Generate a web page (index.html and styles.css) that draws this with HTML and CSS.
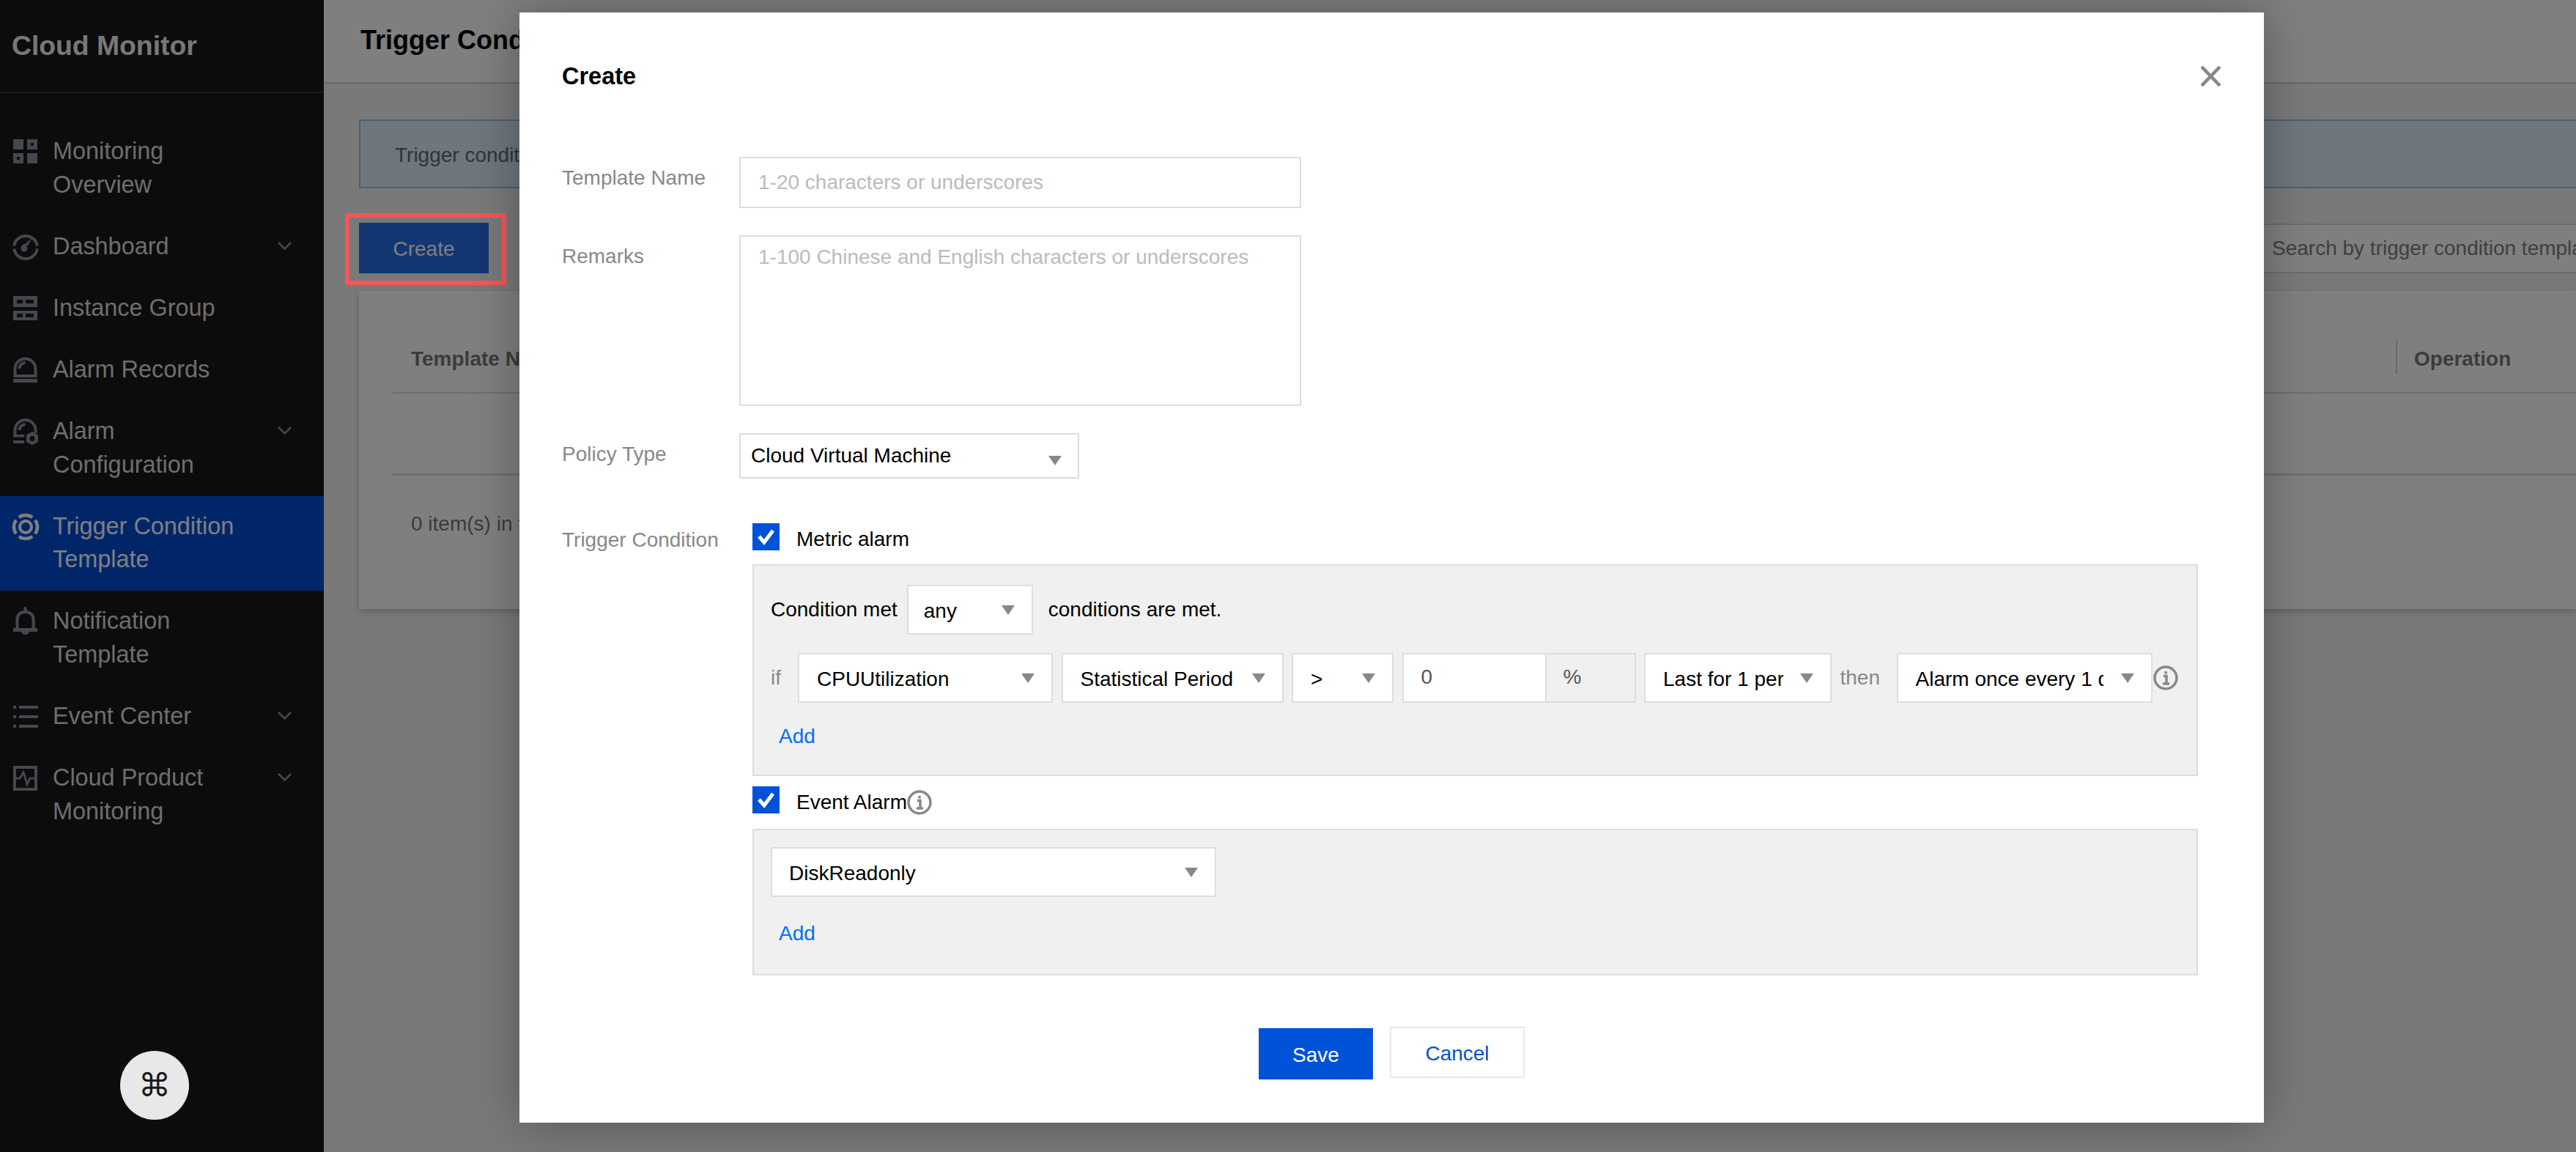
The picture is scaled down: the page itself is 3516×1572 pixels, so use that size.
FILE: index.html
```html
<!DOCTYPE html>
<html lang="en">
<head>
  <meta charset="UTF-8" />
  <title>Cloud Monitor - Trigger Condition Template</title>
  <link rel="stylesheet" href="styles.css">
</head>
<body>

  <!-- === Sidebar === -->
  <aside class="sidebar">
    <div class="brand">Cloud Monitor</div>
    <nav class="nav">
      <a class="nav-item">
        <svg class="nav-icon" viewBox="0 0 36 36"><path fill-rule="evenodd" d="M1 1h14v14H1zM20 1h14v14H20zM25 6v4h4V6zM1 20h14v14H1zM6 25v4h4v-4zM20 20h14v14H20z"/></svg>
        <span class="nav-label">Monitoring<br>Overview</span>
      </a>
      <a class="nav-item">
        <svg class="nav-icon" viewBox="0 0 36 36"><path class="line" d="M2.200 16.500A16 16 0 0 1 33.800 16.500M2.200 20.500A16 16 0 0 0 33.800 20.500"/><circle cx="16" cy="20" r="4.500"/><path d="M12.500 18l9-2.500 4-7.500-1-.5-6.500 6-4.500 1.500z"/></svg>
        <span class="nav-label">Dashboard</span>
        <svg class="chevron" viewBox="0 0 19 11"><path d="M1 1l8.500 8.500L18 1"/></svg>
      </a>
      <a class="nav-item">
        <svg class="nav-icon" viewBox="0 0 36 36"><path fill-rule="evenodd" d="M1 1h33v15H1zM6 6v5h8V6zM18 6v5h11V6zM1 21h33v13H1zM6 25v5h8v-5zM18 25v5h11v-5z"/></svg>
        <span class="nav-label">Instance Group</span>
      </a>
      <a class="nav-item">
        <svg class="nav-icon" viewBox="0 0 36 36"><path class="line" d="M3.500 26V16.500a14 14 0 0 1 28 0V26z"/><path class="line" d="M9.500 16c0-4.500 3.500-8 8-8"/><path d="M1 30h33v5H1z"/></svg>
        <span class="nav-label">Alarm Records</span>
      </a>
      <a class="nav-item">
        <svg class="nav-icon" viewBox="0 0 36 36"><path class="line" d="M3.500 23V16a14 14 0 0 1 28 0v4"/><path class="line" d="M9.500 16c0-4.500 3.500-8 8-8"/><path d="M1 22h15v3.500H1zM1 30h15v4H1z"/><path fill-rule="evenodd" d="M27 18l8 4.500v9.500l-8 4.500-8-4.500v-9.500zM27 24a3.500 3.500 0 1 0 0 7 3.500 3.500 0 0 0 0-7z"/></svg>
        <span class="nav-label">Alarm<br>Configuration</span>
        <svg class="chevron" viewBox="0 0 19 11"><path d="M1 1l8.500 8.500L18 1"/></svg>
      </a>
      <a class="nav-item active">
        <svg class="nav-icon" viewBox="0 0 36 36"><circle class="line" cx="18" cy="18" r="8"/><path class="line wide" d="M8.800 4.900A16 16 0 0 1 27.200 4.900M31.100 8.800A16 16 0 0 1 31.100 27.200M27.200 31.100A16 16 0 0 1 8.800 31.100M4.900 27.200A16 16 0 0 1 4.900 8.800"/></svg>
        <span class="nav-label">Trigger Condition<br>Template</span>
      </a>
      <a class="nav-item">
        <svg class="nav-icon" viewBox="0 0 36 36"><path class="line" d="M6.500 28V15C6.500 9 11 5 17.500 5S28.500 9 28.500 15V28"/><path d="M15.500 0a2 2 0 0 1 4 0v5h-4zM1 27h33v5H1zM12 32h11a5.500 4 0 0 1-11 0z"/></svg>
        <span class="nav-label">Notification<br>Template</span>
      </a>
      <a class="nav-item">
        <svg class="nav-icon" viewBox="0 0 36 36"><path d="M1 3h4v4H1zM9 3h26v4H9zM1 16h4v4H1zM9 16h26v4H9zM1 29h4v4H1zM9 29h26v4H9z"/></svg>
        <span class="nav-label">Event Center</span>
        <svg class="chevron" viewBox="0 0 19 11"><path d="M1 1l8.500 8.500L18 1"/></svg>
      </a>
      <a class="nav-item">
        <svg class="nav-icon" viewBox="0 0 36 36"><path class="line" d="M3 3h29v30H3z"/><path class="line thin" d="M4 18h6l5-8 5 16 4-8h9"/></svg>
        <span class="nav-label">Cloud Product<br>Monitoring</span>
        <svg class="chevron" viewBox="0 0 19 11"><path d="M1 1l8.500 8.500L18 1"/></svg>
      </a>
    </nav>
  </aside>

  <!-- === Page behind the dialog === -->
  <main class="main">
    <header class="page-head"><h1>Trigger Condition Template</h1></header>
    <div class="content">
      <div class="alert">Trigger condition templates</div>
      <div class="toolbar">
        <button class="btn-create">Create</button>
        <div class="search">Search by trigger condition template name</div>
      </div>
      <section class="table-card">
        <div class="table-head">
          <span>Template Name</span>
          <span class="col-op">Operation</span>
        </div>
        <div class="table-empty"></div>
        <div class="table-foot">0 item(s) in total</div>
      </section>
    </div>
  </main>

  <div class="mask"></div>
  <div class="highlight"></div>
  <button class="cmd-btn">⌘</button>

  <!-- === Create dialog === -->
  <div class="modal">
    <div class="modal-head">
      <h2>Create</h2>
      <svg class="close" viewBox="0 0 27 28"><path d="M1 1l25 26M26 1L1 27"/></svg>
    </div>

    <div class="form-row row-name">
      <label>Template Name</label>
      <div class="text-input placeholder">1-20 characters or underscores</div>
    </div>
    <div class="form-row row-remarks">
      <label>Remarks</label>
      <div class="text-area placeholder">1-100 Chinese and English characters or underscores</div>
    </div>
    <div class="form-row row-policy">
      <label>Policy Type</label>
      <div class="select sel-policy"><span>Cloud Virtual Machine</span><i></i></div>
    </div>

    <div class="form-row row-trigger">
      <label>Trigger Condition</label>
      <div class="trigger-body">
        <div class="check-line">
          <svg class="checkbox" viewBox="0 0 37 37"><path d="M9 18l7 8 12-16"/></svg>
          <span>Metric alarm</span>
        </div>
        <div class="panel panel-metric">
          <div class="cond-line">
            <span class="cond-met">Condition met</span>
            <div class="select sel-any"><span>any</span><i></i></div>
            <span class="cond-tail">conditions are met.</span>
          </div>
          <div class="cond-line rule-line">
            <span class="word word-if">if</span>
            <div class="select sel-metric"><span>CPUUtilization</span><i></i></div>
            <div class="select sel-period"><span>Statistical Period</span><i></i></div>
            <div class="select sel-op"><span>&gt;</span><i></i></div>
            <div class="input-group">
              <span class="ig-value">0</span>
              <span class="ig-unit">%</span>
            </div>
            <div class="select sel-last"><span>Last for 1 period</span><i></i></div>
            <span class="word word-then">then</span>
            <div class="select sel-action"><span>Alarm once every 1 day</span><i></i></div>
            <svg class="info" viewBox="0 0 34 34"><circle cx="17" cy="17" r="15"/><path d="M14 14.500h4V25M13 25h9M17 8v3.500"/></svg>
          </div>
          <a class="add-link">Add</a>
        </div>

        <div class="check-line check-event">
          <svg class="checkbox" viewBox="0 0 37 37"><path d="M9 18l7 8 12-16"/></svg>
          <span>Event Alarm</span>
          <svg class="info" viewBox="0 0 34 34"><circle cx="17" cy="17" r="15"/><path d="M14 14.500h4V25M13 25h9M17 8v3.500"/></svg>
        </div>
        <div class="panel panel-event">
          <div class="select sel-event"><span>DiskReadonly</span><i></i></div>
          <a class="add-link">Add</a>
        </div>
      </div>
    </div>

    <div class="modal-foot">
      <button class="btn-save">Save</button>
      <button class="btn-cancel">Cancel</button>
    </div>
  </div>

</body>
</html>
```

FILE: styles.css
```css
/* Basic Resets */
* { margin: 0; padding: 0; box-sizing: border-box; font-family: "Liberation Sans", Arial, sans-serif; }
html, body { width: 3516px; height: 1572px; overflow: hidden; }
body { display: flex; position: relative; background: #f3f3f3; color: #000; font-size: 28px; }
button { border: none; font-size: 28px; }

/* === Sidebar === */
.sidebar { width: 442px; flex: none; background: #181818; color: #dcdcdc; }
.brand {
  height: 127px;
  padding: 38px 0 0 16px;
  border-bottom: 2px solid #333;
  font-size: 37.300px;
  line-height: 48px;
  font-weight: bold;
  color: #f0f0f0;
}
.nav { padding-top: 38px; }
.nav-item {
  display: flex;
  align-items: flex-start;
  padding: 19.100px 0;
  font-size: 32.400px;
  line-height: 45.800px;
}
.nav-item.active { background: #004cd4; color: #fff; }
.nav-item.active .nav-icon { fill: #fff; stroke: #fff; }
.nav-icon {
  width: 36px;
  height: 36px;
  flex: none;
  margin: 5px 19px 0 17px;
  fill: #88919c;
  stroke: #88919c;
  stroke-width: 0;
  overflow: visible;
}
.nav-icon .line { fill: none; stroke-width: 4; }
.nav-icon .wide { stroke-width: 4.500; }
.nav-icon .thin { stroke-width: 3; }
.chevron {
  width: 19px;
  height: 11px;
  flex: none;
  margin: 16px 44px 0 auto;
  fill: none;
  stroke: #88919c;
  stroke-width: 2.500;
}

/* === Page behind the dialog === */
.main { flex: 1; min-width: 0; overflow: hidden; }
.page-head { height: 115px; padding: 33px 0 0 50px; background: #fff; border-bottom: 3px solid #ddd; }
.page-head h1 { font-size: 36px; line-height: 44px; white-space: nowrap; }
.content { padding: 48px 0 0 48px; }
.alert {
  height: 94px;
  padding-left: 47px;
  line-height: 94px;
  background: #dcecfd;
  border: 2px solid #94c0f0;
  border-right: none;
  color: #5e6a75;
}
.toolbar { display: flex; justify-content: space-between; margin-top: 47px; height: 69px; }
.btn-create { width: 177px; padding-top: 3px; background: #266ce8; color: #fff; }
.search {
  width: 426px;
  height: 68px;
  margin-top: 1px;
  padding-left: 11px;
  line-height: 64px;
  background: #fff;
  border-top: 2px solid #d8d8d8;
  border-bottom: 2px solid #d8d8d8;
  color: #7f7f7f;
  white-space: nowrap;
  overflow: hidden;
}
.table-card { height: 434px; margin-top: 24px; padding-left: 46px; background: #fff; box-shadow: 0 4px 10px rgba(0,0,0,.2); color: #777; }
.table-head {
  display: flex;
  justify-content: space-between;
  height: 140px;
  padding: 71px 0 0 25px;
  font-weight: bold;
  line-height: 44px;
  border-bottom: 2px solid #ddd;
}
.col-op { position: relative; width: 221px; }
.col-op::before { content: ""; position: absolute; left: -25px; top: -4px; width: 2px; height: 46px; background: #d0d0d8; }
.table-empty { height: 112px; border-bottom: 3px solid #ddd; }
.table-foot { padding: 44px 0 0 25px; line-height: 44px; white-space: nowrap; }

.mask { position: absolute; inset: 0; background: rgba(0,0,0,.5); }
.highlight { position: absolute; left: 471px; top: 291px; width: 220px; height: 98px; border: 6px solid #f55656; border-radius: 2px; }
.cmd-btn {
  position: absolute;
  left: 164px;
  top: 1434px;
  width: 94px;
  height: 94px;
  border-radius: 50%;
  background: #e8e8e8;
  color: #1a1a1a;
  font-family: "DejaVu Sans", sans-serif;
  font-size: 44px;
  line-height: 94px;
}

/* === Create dialog === */
.modal {
  position: absolute;
  left: 709px;
  top: 17px;
  width: 2381px;
  height: 1515px;
  padding: 0 90px 0 58px;
  background: #fff;
  box-shadow: 0 0 60px rgba(0,0,0,.3);
}
.modal-head { display: flex; justify-content: space-between; align-items: center; height: 197px; padding: 64px 0 87px; margin-right: -31px; }
.modal-head h2 { font-size: 32.500px; line-height: 46px; }
.close { width: 27px; height: 28px; fill: none; stroke: #888; stroke-width: 4.500; }

.form-row { display: flex; }
.form-row label { width: 242px; flex: none; padding-top: 6px; line-height: 46px; color: #888; }
.row-remarks { margin-top: 37px; }
.row-policy { margin-top: 37px; }
.row-trigger { margin-top: 61px; }
.row-trigger label { padding-top: 0; }
.placeholder { color: #bbb; }
.text-input, .text-area { width: 767px; padding-left: 24px; border: 2px solid #ddd; }
.text-input { height: 70px; line-height: 66px; }
.text-area { height: 233px; padding-top: 6px; line-height: 44px; }

.select {
  position: relative;
  display: flex;
  align-items: center;
  height: 68px;
  padding-left: 24px;
  background: #fff;
  border: 2px solid #ddd;
  flex: none;
  white-space: nowrap;
}
.select span { display: block; overflow: hidden; line-height: 44px; padding-top: 3px; }
.select i {
  position: absolute;
  right: 23px;
  top: 50%;
  margin-top: -6px;
  border-top: 13px solid #888;
  border-left: 9px solid transparent;
  border-right: 9px solid transparent;
}
.sel-policy { width: 464px; height: 62px; padding-left: 14px; }
.sel-policy span { padding-top: 0; }
.sel-policy i { right: 22px; margin-top: 0; }
.sel-any { width: 172px; padding-left: 21px; }
.sel-metric { width: 348px; }
.sel-period { width: 303px; }
.sel-op { width: 139px; }
.sel-last { width: 256px; }
.sel-last span { width: 164px; }
.sel-action { width: 349px; }
.sel-action span { width: 256px; }
.sel-event { width: 608px; padding-left: 23px; }

.trigger-body { width: 1973px; margin-left: 18px; }
.check-line { display: flex; align-items: center; height: 37px; }
.check-line span { padding-top: 6px; }
.checkbox { width: 37px; height: 37px; flex: none; margin-right: 23px; background: #0052d9; fill: none; stroke: #fff; stroke-width: 5; }
.check-event { margin-top: 14px; }
.check-event .info { margin-top: 6px; }
.panel { background: #f0f0f0; border: 2px solid #ddd; }
.panel-metric { margin-top: 19px; padding: 26px 0 30px 23px; }
.panel-event { margin-top: 21px; padding: 23px 0 33px 23px; }
.cond-line { display: flex; align-items: center; }
.cond-met { margin-right: 13px; }
.cond-tail { margin-left: 21px; }
.rule-line { margin-top: 25px; gap: 11.500px; }
.word { color: #888; }
.word-if { width: 25.500px; }
.word-then { width: 65.500px; }
.input-group { display: flex; width: 319px; height: 68px; flex: none; border: 2px solid #ddd; line-height: 62px; color: #555; }
.ig-value { width: 195px; padding-left: 24px; background: #fff; border-right: 2px solid #ddd; }
.ig-unit { padding-left: 23px; }
.info { width: 34px; height: 34px; flex: none; fill: none; stroke: #888; stroke-width: 3.500; }
.rule-line .info { margin-left: -10px; }
.add-link { display: block; width: max-content; margin: 22px 0 0 11px; padding-top: 2px; line-height: 44px; color: #006eff; }
.panel-event .add-link { margin-top: 26px; }

.modal-foot { display: flex; justify-content: center; gap: 23px; margin: 70px 0 0 32px; }
.btn-save { width: 156px; height: 70px; margin-top: 2px; padding-top: 3px; background: #0052d9; color: #fff; }
.btn-cancel { width: 184px; height: 70px; padding-top: 3px; background: #fff; border: 2px solid #e6e9ef; color: #0052d9; }
```
